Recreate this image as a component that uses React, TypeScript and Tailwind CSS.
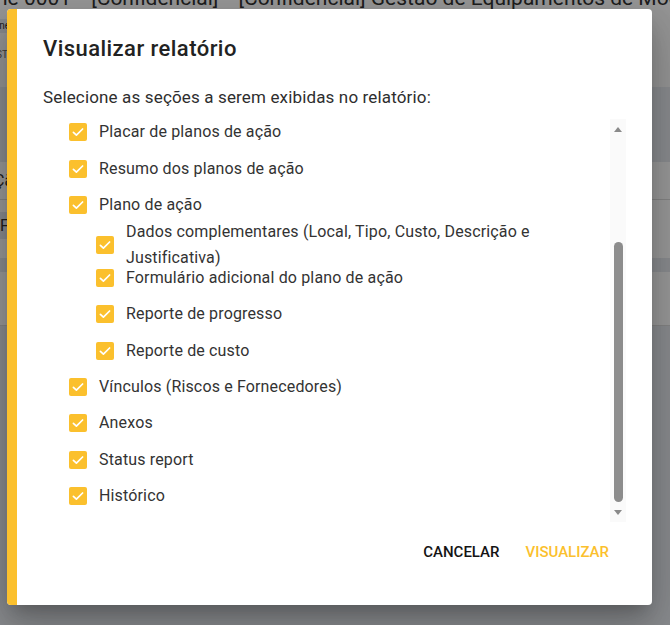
import React from "react";

type Section = {
  label: string;
  nested?: boolean;
  multiline?: boolean;
};

const sections: Section[] = [
  { label: "Placar de planos de ação" },
  { label: "Resumo dos planos de ação" },
  { label: "Plano de ação" },
  {
    label: "Dados complementares (Local, Tipo, Custo, Descrição e Justificativa)",
    nested: true,
    multiline: true,
  },
  { label: "Formulário adicional do plano de ação", nested: true },
  { label: "Reporte de progresso", nested: true },
  { label: "Reporte de custo", nested: true },
  { label: "Vínculos (Riscos e Fornecedores)" },
  { label: "Anexos" },
  { label: "Status report" },
  { label: "Histórico" },
];

function CheckIcon() {
  return (
    <svg width="18" height="18" viewBox="0 0 18 18" className="shrink-0">
      <rect x="0" y="0" width="18" height="18" rx="2" fill="#FBC02D" />
      <polyline
        points="4.4,9.3 7.4,12.2 13.6,6"
        fill="none"
        stroke="#fff"
        strokeWidth="1.7"
        strokeLinecap="round"
        strokeLinejoin="round"
      />
    </svg>
  );
}

// page behind the dialog, darkened by the backdrop
function BackgroundPage() {
  return (
    <div className="w-[670px] h-[625px] overflow-hidden bg-white flex flex-col text-[#333]">
      <div className="h-[10px] overflow-hidden bg-white">
        <div className="-mt-[14px] -ml-[4px] whitespace-nowrap text-[21px] leading-[24px] flex items-end gap-[10px]">
          <span>ne 0001</span>
          <span className="inline-block w-[12px] h-[14px] mb-[2px] bg-[#f08c4a] rounded-[2px]" />
          <span>[Confidencial]</span>
          <span className="inline-block w-[12px] h-[14px] mb-[2px] bg-[#f08c4a] rounded-[2px]" />
          <span>[Confidencial] Gestão de Equipamentos de Modelos</span>
        </div>
      </div>
      <div className="h-[77px] bg-[#fafafa] flex flex-col pt-[9px] gap-[14px] text-[10px]">
        <div className="w-[40px] h-[14px] bg-[#e3e8ef] -ml-[30px] text-right leading-[14px]">ne</div>
        <div className="-ml-[4px] text-[#666]">STATUS</div>
      </div>
      <div className="h-[75px] bg-[#e6e9ee]" />
      <div className="h-[38px] bg-white border-b border-[#dcdcdc] flex items-center text-[16px] -ml-[6px]">
        Ção
      </div>
      <div className="h-[58px] bg-white flex flex-col pt-[12px]">
        <div className="w-[12px] h-[27px] bg-[#e3e8ef] text-[16px] leading-[27px]">F</div>
      </div>
      <div className="h-[14px] bg-[#e6e9ee]" />
      <div className="h-[54px] bg-white border-b border-[#dcdcdc]" />
      <div className="flex-1 bg-[#e6e9ee]" />
    </div>
  );
}

function ScrollTrack() {
  return (
    <div className="w-[16px] mt-[5px] h-[403px] bg-[#fafafa] flex flex-col items-center shrink-0">
      <div className="h-[20px] flex items-center justify-center">
        <div className="w-0 h-0 border-x-[4.5px] border-x-transparent border-b-[5px] border-b-[#8a8a8a]" />
      </div>
      <div className="h-[103px]" />
      <div className="w-[9px] h-[260px] rounded-full bg-[#8c8c8c]" />
      <div className="h-[20px] flex items-center justify-center">
        <div className="w-0 h-0 border-x-[4.5px] border-x-transparent border-t-[5px] border-t-[#8a8a8a]" />
      </div>
    </div>
  );
}

export default function App() {
  return (
    <div className="relative w-[670px] h-[625px] overflow-hidden font-['Roboto',sans-serif]">
      <BackgroundPage />
      <div className="absolute inset-0 bg-black/40" />
      <div className="absolute inset-0 pl-[7px] pt-[9px]">
        <div className="w-[645px] h-[596px] bg-white rounded-[4px] overflow-hidden flex shadow-[0_11px_15px_-7px_rgba(0,0,0,0.2),0_24px_38px_3px_rgba(0,0,0,0.14),0_9px_46px_8px_rgba(0,0,0,0.12)]">
          <div className="w-[10px] bg-[#FBC02D] shrink-0" />
          <div className="flex-1 flex flex-col pl-[26px] pr-[26px] pt-[24px]">
            <h2 className="h-[32px] leading-[32px] text-[22px] font-medium tracking-[0.45px] text-[#222]">
              Visualizar relatório
            </h2>
            <p className="mt-[20px] leading-[24px] text-[17px] tracking-[0.15px] text-[#2e2e2e]">
              Selecione as seções a serem exibidas no relatório:
            </p>
            <div className="mt-[5px] h-[408px] flex">
              <div className="flex-1 flex flex-col">
                {sections.map((s) => (
                  <div
                    key={s.label}
                    className={`h-[36.4px] flex items-center gap-[12px] ${
                      s.nested ? "pl-[53px]" : "pl-[26px]"
                    } ${s.multiline ? "pt-[7px]" : ""}`}
                  >
                    <CheckIcon />
                    <span
                      className={`text-[16px] tracking-[0.15px] text-[#333] ${
                        s.multiline ? "w-[440px] leading-[26px]" : "leading-[24px] whitespace-nowrap"
                      }`}
                    >
                      {s.label}
                    </span>
                  </div>
                ))}
              </div>
              <ScrollTrack />
            </div>
            <div className="mt-[12px] pr-[9px] flex justify-end gap-[10px]">
              <button className="h-[36px] px-[8px] text-[15px] font-medium uppercase text-[#141414]">
                Cancelar
              </button>
              <button className="h-[36px] px-[8px] text-[15px] font-medium uppercase text-[#FBC02D]">
                Visualizar
              </button>
            </div>
          </div>
        </div>
      </div>
    </div>
  );
}
